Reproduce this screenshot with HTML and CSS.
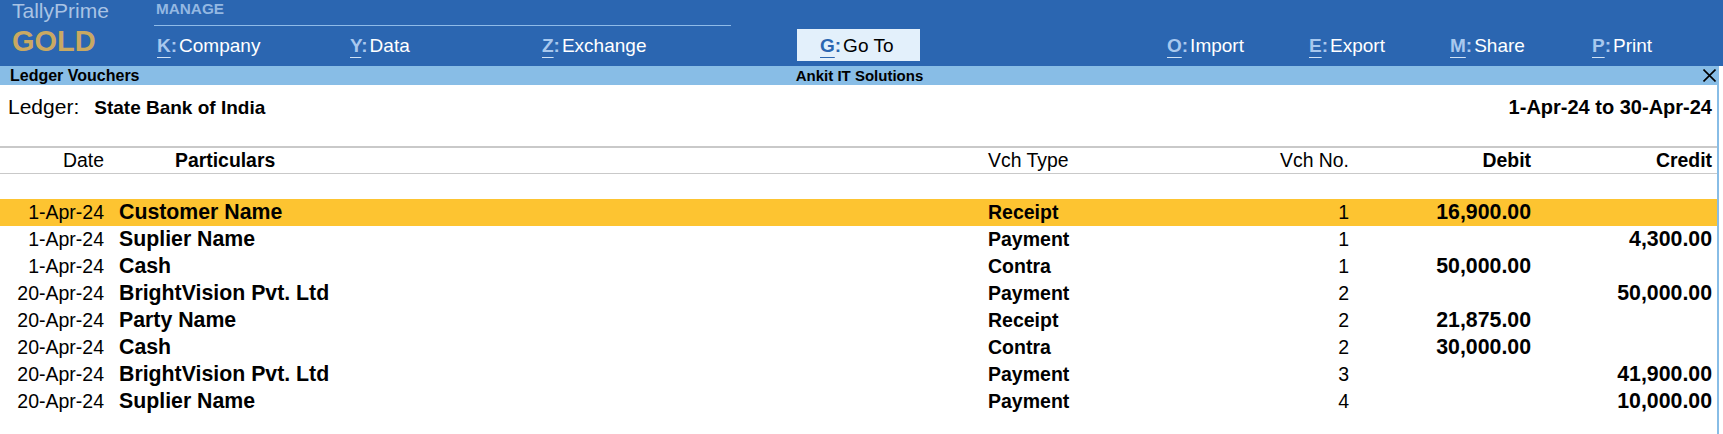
FILE: index.html
```html
<!DOCTYPE html>
<html>
<head>
<meta charset="utf-8">
<link rel="stylesheet" href="styles.css">
</head>
<body>
<div class="topbar">
  <div class="logo">
    <div class="brand">TallyPrime</div>
    <div class="edition">GOLD</div>
  </div>
  <div class="menu">
    <div class="manage"><span>MANAGE</span></div>
    <div class="items">
      <div class="item w-k"><span class="key"><u>K</u>:</span>Company</div>
      <div class="item w-y"><span class="key"><u>Y</u>:</span>Data</div>
      <div class="item w-z"><span class="key"><u>Z</u>:</span>Exchange</div>
      <div class="item goto"><span class="key"><u>G</u>:</span>Go To</div>
      <div class="item w-o"><span class="key"><u>O</u>:</span>Import</div>
      <div class="item w-e"><span class="key"><u>E</u>:</span>Export</div>
      <div class="item w-m"><span class="key"><u>M</u>:</span>Share</div>
      <div class="item w-p"><span class="key"><u>P</u>:</span>Print</div>
    </div>
  </div>
</div>
<div class="window">
  <div class="strip">
    <div class="strip-left">Ledger Vouchers</div>
    <div class="strip-center">Ankit IT Solutions</div>
    <div class="strip-right">
      <svg class="close" width="13" height="13" viewBox="0 0 13 13"><path d="M0.5 0.5 L12.5 12.5 M12.5 0.5 L0.5 12.5" stroke="#000" stroke-width="1.6" fill="none"/></svg>
    </div>
  </div>
  <div class="content">
    <div class="ledger">
      <div><span class="lbl">Ledger:</span><span class="lname">State Bank of India</span></div>
      <div class="period">1-Apr-24 to 30-Apr-24</div>
    </div>
    <div class="thead">
      <div class="c-date">Date</div>
      <div class="c-part h-part b">Particulars</div>
      <div class="c-type">Vch Type</div>
      <div class="c-no">Vch No.</div>
      <div class="c-dr b">Debit</div>
      <div class="c-cr b">Credit</div>
    </div>
    <div class="rows">
      <div class="row sel">
        <div class="c-date">1-Apr-24</div><div class="c-part">Customer Name</div><div class="c-type">Receipt</div><div class="c-no">1</div><div class="c-dr amt">16,900.00</div><div class="c-cr amt"></div>
      </div>
      <div class="row">
        <div class="c-date">1-Apr-24</div><div class="c-part">Suplier Name</div><div class="c-type">Payment</div><div class="c-no">1</div><div class="c-dr amt"></div><div class="c-cr amt">4,300.00</div>
      </div>
      <div class="row">
        <div class="c-date">1-Apr-24</div><div class="c-part">Cash</div><div class="c-type">Contra</div><div class="c-no">1</div><div class="c-dr amt">50,000.00</div><div class="c-cr amt"></div>
      </div>
      <div class="row">
        <div class="c-date">20-Apr-24</div><div class="c-part">BrightVision Pvt. Ltd</div><div class="c-type">Payment</div><div class="c-no">2</div><div class="c-dr amt"></div><div class="c-cr amt">50,000.00</div>
      </div>
      <div class="row">
        <div class="c-date">20-Apr-24</div><div class="c-part">Party Name</div><div class="c-type">Receipt</div><div class="c-no">2</div><div class="c-dr amt">21,875.00</div><div class="c-cr amt"></div>
      </div>
      <div class="row">
        <div class="c-date">20-Apr-24</div><div class="c-part">Cash</div><div class="c-type">Contra</div><div class="c-no">2</div><div class="c-dr amt">30,000.00</div><div class="c-cr amt"></div>
      </div>
      <div class="row">
        <div class="c-date">20-Apr-24</div><div class="c-part">BrightVision Pvt. Ltd</div><div class="c-type">Payment</div><div class="c-no">3</div><div class="c-dr amt"></div><div class="c-cr amt">41,900.00</div>
      </div>
      <div class="row">
        <div class="c-date">20-Apr-24</div><div class="c-part">Suplier Name</div><div class="c-type">Payment</div><div class="c-no">4</div><div class="c-dr amt"></div><div class="c-cr amt">10,000.00</div>
      </div>
    </div>
  </div>
</div>
</body>
</html>
```

FILE: styles.css
```css
html, body {
  margin: 0;
  padding: 0;
}
body {
  width: 1723px;
  height: 434px;
  overflow: hidden;
  background: #ffffff;
  font-family: "Liberation Sans", Arial, sans-serif;
  color: #000;
}

/* ---------- top bar ---------- */
.topbar {
  display: flex;
  height: 66px;
  background: #2b66b1;
}
.logo {
  width: 142px;
  padding-left: 12px;
  display: flex;
  flex-direction: column;
}
.brand {
  font-size: 21px;
  line-height: 22px;
  color: #a9c3e4;
}
.edition {
  margin-top: 5px;
  font-size: 29px;
  line-height: 28px;
  font-weight: bold;
  color: #c9a962;
}
.menu {
  flex: 1;
  display: flex;
  flex-direction: column;
}
.manage {
  width: 575px;
  height: 25px;
  padding-left: 2px;
  border-bottom: 1px solid #8fbbe8;
  font-size: 15.3px;
  line-height: 17px;
  font-weight: bold;
  color: #94b8e2;
}
.items {
  display: flex;
  padding-left: 3px;
}
.item {
  height: 32px;
  margin-top: 3px;
  padding-top: 5px;
  box-sizing: border-box;
  font-size: 19px;
  line-height: 24px;
  color: #ffffff;
  white-space: nowrap;
}
.key {
  font-weight: bold;
  color: #a8c8ee;
  margin-right: 2px;
}
.key u {
  text-decoration-thickness: 1px;
  text-underline-offset: 5px;
  text-decoration-color: #d0e2f5;
}
.w-k { width: 193px; }
.w-y { width: 192px; }
.w-z { width: 255px; }
.goto {
  width: 123px;
  margin-right: 247px;
  padding-left: 23px;
  background: #e3f0fb;
  color: #000;
}
.goto .key { color: #2b66b1; }
.goto .key u { text-decoration-color: #2b66b1; }
.w-o { width: 142px; }
.w-e { width: 141px; }
.w-m { width: 142px; }
.w-p { width: 131px; }

/* ---------- window ---------- */
.window {
  width: 1719px;
}
.strip {
  display: grid;
  grid-template-columns: 1fr auto 1fr;
  height: 19px;
  background: #88bde6;
  font-size: 15px;
  line-height: 19px;
  font-weight: bold;
}
.strip-left { padding-left: 10px; font-size: 16px; }
.strip-right {
  display: flex;
  justify-content: flex-end;
  align-items: center;
  padding-right: 3px;
}
.close { display: block; }

.content {
  height: 349px;
  box-sizing: border-box;
  border-right: 2px solid #88bde6;
}

.ledger {
  display: flex;
  justify-content: space-between;
  padding: 10px 5px 0 8px;
  height: 24px;
  line-height: 24px;
  font-size: 19px;
  margin-bottom: 27px;
}
.lbl { font-size: 21px; }
.lname {
  font-weight: bold;
  margin-left: 15px;
}
.period {
  font-weight: bold;
  font-size: 20px;
}

.thead, .row {
  display: grid;
  grid-template-columns: 105px 883px 212px 150px 182px 181px;
}
.thead {
  height: 25px;
  border-top: 2px solid #c9c9c9;
  border-bottom: 1px solid #c9c9c9;
  font-size: 19.4px;
  line-height: 25px;
}
.b { font-weight: bold; }
.c-date { text-align: right; padding-right: 1px; }
.c-part { padding-left: 14px; }
.h-part { padding-left: 70px; }
.c-no { text-align: right; padding-right: 1px; }
.c-dr, .c-cr { text-align: right; padding-right: 1px; }

.rows {
  margin-top: 25px;
}
.row {
  height: 27px;
  line-height: 27px;
  font-size: 19.5px;
}
.row .c-part {
  font-weight: bold;
  font-size: 21.3px;
}
.row .c-type { font-weight: bold; }
.row .amt {
  font-weight: bold;
  font-size: 21.3px;
}
.row.sel { background: #fdc431; }
```
